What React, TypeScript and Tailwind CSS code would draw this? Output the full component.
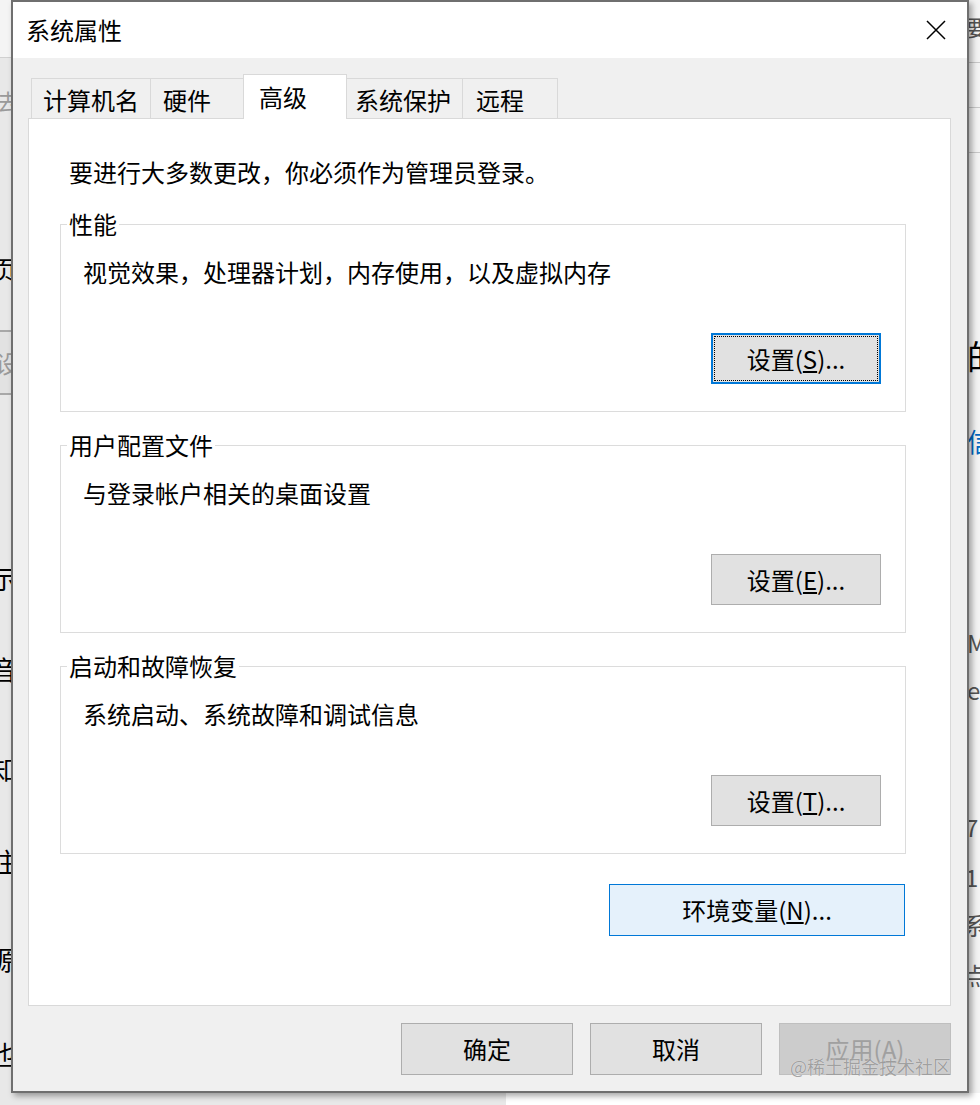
import React from "react";

const font = { fontFamily: '"Noto Sans CJK SC", "Noto Sans", sans-serif' };

function Tab({ label, width, pl, selected }: { label: string; width: string; pl: string; selected?: boolean }) {
  if (selected) {
    return (
      <div className={`${width} ${pl} -ml-px h-[45px] bg-white border border-b-0 border-[#d9d9d9] flex items-center text-[24px] text-black`}>
        {label}
      </div>
    );
  }
  return (
    <div className={`${width} ${pl} -ml-px first:ml-0 h-[41px] bg-[#f0f0f0] border border-[#d9d9d9] flex items-center pt-[2px] text-[24px] text-black`}>
      {label}
    </div>
  );
}

function WinButton({ children, focused, hover, disabled, className }: { children: React.ReactNode; focused?: boolean; hover?: boolean; disabled?: boolean; className: string }) {
  if (focused) {
    return (
      <button className={`${className} bg-[#e1e1e1] border-2 border-[#0078d7] p-px`}>
        <div className="w-full h-full border border-dotted border-black flex items-center justify-center text-[24px] text-black">
          {children}
        </div>
      </button>
    );
  }
  const look = disabled
    ? "bg-[#cccccc] border-[#bfbfbf] text-[#a0a0a0]"
    : hover
    ? "bg-[#e5f1fb] border-[#0078d7] text-black"
    : "bg-[#e1e1e1] border-[#adadad] text-black";
  return (
    <button className={`${className} ${look} border flex items-center justify-center text-[24px]`}>
      {children}
    </button>
  );
}

function Group({ title, text, btn, mt }: { title: string; text: string; btn: React.ReactNode; mt: string }) {
  return (
    <fieldset className={`${mt} ml-[31px] mr-[44px] border border-[#dcdcdc] pl-[6px] pr-0`}>
      <legend className="px-[2px] leading-[26px] text-[24px] text-black">{title}</legend>
      <div className="pl-[16px] pr-[24px] pb-[27px]">
        <div className="mt-[19px] leading-[32px] text-[24px] text-black">{text}</div>
        <div className="mt-[45px] flex justify-end">{btn}</div>
      </div>
    </fieldset>
  );
}

function EdgeChar({ ch, mt, cls }: { ch: string; mt: string; cls: string }) {
  return <div className={`${mt} h-[32px] flex items-center whitespace-nowrap ${cls}`}>{ch}</div>;
}

export default function App() {
  return (
    <div className="relative w-[980px] h-[1105px] bg-white overflow-hidden" style={font}>
      <div className="flex h-[1093px]">
        {/* left backdrop */}
        <div className="w-[11px] shrink-0 overflow-hidden bg-[#e8e8e8] flex flex-col">
          <div className="h-[58px] shrink-0 bg-[#f4f4f4] border-b border-[#d0d0d0]" />
          <EdgeChar ch="去" mt="mt-[26px]" cls="justify-end text-[22px] text-[#9a9a9a] -mr-[8px]" />
          <EdgeChar ch="页" mt="mt-[136px]" cls="justify-end text-[26px] text-black -mr-[6px]" />
          <div className="mt-[46px] h-[65px] shrink-0 border-y-2 border-[#a8a8a8] bg-[#e2e2e2] flex items-center justify-end whitespace-nowrap text-[24px] text-[#9a9a9a] -mr-[8px]">设</div>
          <EdgeChar ch="示" mt="mt-[166px]" cls="justify-end text-[26px] text-black -mr-[6px]" />
          <EdgeChar ch="音" mt="mt-[59px]" cls="justify-end text-[26px] text-black -mr-[6px]" />
          <EdgeChar ch="知" mt="mt-[68px]" cls="justify-end text-[26px] text-black -mr-[6px]" />
          <EdgeChar ch="注" mt="mt-[60px]" cls="justify-end text-[26px] text-black -mr-[6px]" />
          <EdgeChar ch="源" mt="mt-[66px]" cls="justify-end text-[26px] text-black -mr-[6px]" />
          <EdgeChar ch="也" mt="mt-[63px]" cls="justify-end text-[26px] text-black -mr-[6px]" />
        </div>

        {/* dialog */}
        <div className="relative z-10 w-[958px] shrink-0 border-2 border-[#6f6f6f] bg-[#f0f0f0] flex flex-col shadow-[3px_3px_6px_rgba(0,0,0,0.35)]">
          <div className="h-[56px] bg-white flex items-center justify-between pl-[13px] pr-[21px]">
            <span className="text-[24px] text-black">系统属性</span>
            <svg width="20" height="20" viewBox="0 0 20 20" fill="none" stroke="#000" strokeWidth="1.5">
              <path d="M1 1 L19 19 M19 1 L1 19" />
            </svg>
          </div>

          <div className="pt-[16px] pl-[15px] pr-[16px] pb-[16px] flex flex-col">
            <div className="relative z-10 flex items-end pl-[3px] -mb-px">
              <Tab label="计算机名" width="w-[120px]" pl="pl-[11px]" />
              <Tab label="硬件" width="w-[94px]" pl="pl-[12px]" />
              <Tab label="高级" width="w-[104px]" pl="pl-[15px]" selected />
              <Tab label="系统保护" width="w-[117px]" pl="pl-[8px]" />
              <Tab label="远程" width="w-[96px]" pl="pl-[13px]" />
            </div>

            <div className="h-[888px] bg-white border border-[#d9d9d9] flex flex-col pt-[37px]">
              <div className="pl-[40px] leading-[32px] text-[24px] text-black">要进行大多数更改，你必须作为管理员登录。</div>

              <Group
                mt="mt-[23px]"
                title="性能"
                text="视觉效果，处理器计划，内存使用，以及虚拟内存"
                btn={
                  <WinButton focused className="w-[170px] h-[51px]">
                    设置(<span className="underline underline-offset-2">S</span>)...
                  </WinButton>
                }
              />
              <Group
                mt="mt-[20px]"
                title="用户配置文件"
                text="与登录帐户相关的桌面设置"
                btn={
                  <WinButton className="w-[170px] h-[51px]">
                    设置(<span className="underline underline-offset-2">E</span>)...
                  </WinButton>
                }
              />
              <Group
                mt="mt-[20px]"
                title="启动和故障恢复"
                text="系统启动、系统故障和调试信息"
                btn={
                  <WinButton className="w-[170px] h-[51px]">
                    设置(<span className="underline underline-offset-2">T</span>)...
                  </WinButton>
                }
              />

              <div className="mt-[30px] mr-[45px] flex justify-end">
                <WinButton hover className="w-[296px] h-[52px]">
                  环境变量(<span className="underline underline-offset-2">N</span>)...
                </WinButton>
              </div>
            </div>

            <div className="mt-[17px] flex justify-end gap-[17px]">
              <WinButton className="w-[172px] h-[52px]">确定</WinButton>
              <WinButton className="w-[172px] h-[52px]">取消</WinButton>
              <WinButton disabled className="w-[172px] h-[52px]">
                应用(<span className="underline underline-offset-2">A</span>)
              </WinButton>
            </div>
          </div>
        </div>

        {/* right backdrop */}
        <div className="w-[11px] shrink-0 overflow-hidden bg-[#f3f3f3] flex flex-col">
          <EdgeChar ch="要" mt="mt-[10px]" cls="text-[22px] text-[#555] -ml-[3px]" />
          <div className="mt-[20px] h-px shrink-0 bg-[#c8c8c8]" />
          <div className="mt-[44px] h-px shrink-0 bg-[#c8c8c8]" />
          <div className="mt-[44px] h-px shrink-0 bg-[#c8c8c8]" />
          <div className="mt-[182px] h-[40px] flex items-center whitespace-nowrap text-[34px] text-black -ml-[2px]">的</div>
          <EdgeChar ch="信" mt="mt-[49px]" cls="text-[26px] text-[#0067c0] -ml-[2px]" />
          <EdgeChar ch="M" mt="mt-[171px]" cls="text-[24px] text-[#555] -ml-[2px]" />
          <EdgeChar ch="e" mt="mt-[15px]" cls="text-[24px] text-[#555] -ml-[2px]" />
          <EdgeChar ch="7" mt="mt-[105px]" cls="text-[24px] text-[#555] -ml-[4px]" />
          <EdgeChar ch="1" mt="mt-[18px]" cls="text-[24px] text-[#555] -ml-[4px]" />
          <EdgeChar ch="系" mt="mt-[16px]" cls="text-[24px] text-[#555] -ml-[6px]" />
          <EdgeChar ch="点" mt="mt-[18px]" cls="text-[24px] text-[#555] -ml-[6px]" />
        </div>
      </div>

      {/* bottom backdrop */}
      <div className="flex h-[12px]">
        <div className="w-[506px] bg-[#e8e8e8]" />
        <div className="flex-1 bg-white" />
      </div>

      {/* watermark */}
      <div className="absolute z-20 left-[790px] top-[1054px] text-[18px] leading-[24px] text-[#9c9c9c] opacity-90 [text-shadow:0_0_1px_#fff]">
        @稀土掘金技术社区
      </div>
    </div>
  );
}
